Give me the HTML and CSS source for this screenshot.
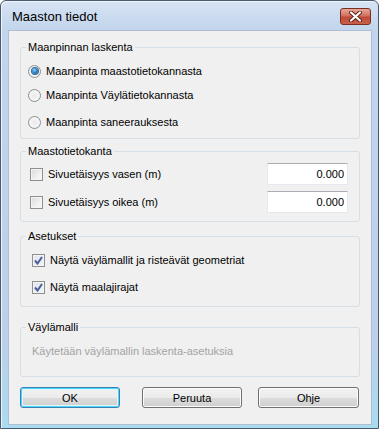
FILE: index.html
```html
<!DOCTYPE html>
<html lang="fi">
<head>
    <meta charset="UTF-8">
    <title>Maaston tiedot</title>
    <link rel="stylesheet" href="styles.css">
</head>
<body>
    <div class="window">
        <div class="titlebar">
            <span class="title">Maaston tiedot</span>
            <span class="close">
                <svg width="15" height="11" viewBox="0 0 15 11">
                    <path d="M3 1.5 L12 9.5 M12 1.5 L3 9.5" stroke="#5a2018" stroke-width="4" stroke-linecap="round"/>
                    <path d="M3 1.5 L12 9.5 M12 1.5 L3 9.5" stroke="#fff" stroke-width="2.2" stroke-linecap="round"/>
                </svg>
            </span>
        </div>

        <div class="client">
            <fieldset class="group group-surface">
                <legend>Maanpinnan laskenta</legend>
                <div class="row row-first"><span class="radio checked"></span>Maanpinta maastotietokannasta</div>
                <div class="row row-second"><span class="radio"></span>Maanpinta Väylätietokannasta</div>
                <div class="row row-third"><span class="radio"></span>Maanpinta saneerauksesta</div>
            </fieldset>

            <fieldset class="group group-db">
                <legend>Maastotietokanta</legend>
                <div class="field-row field-first">
                    <span class="check"></span>
                    <span class="field-label">Sivuetäisyys vasen (m)</span>
                    <input class="num" type="text" value="0.000">
                </div>
                <div class="field-row field-second">
                    <span class="check"></span>
                    <span class="field-label">Sivuetäisyys oikea (m)</span>
                    <input class="num" type="text" value="0.000">
                </div>
            </fieldset>

            <fieldset class="group group-settings">
                <legend>Asetukset</legend>
                <div class="row row-check first"><span class="check checked"><svg width="9" height="9" viewBox="0 0 9 9"><path d="M1 4.5 L3.5 7.5 L8 1" fill="none" stroke="#4a5f97" stroke-width="2"/></svg></span>Näytä väylämallit ja risteävät geometriat</div>
                <div class="row row-check"><span class="check checked"><svg width="9" height="9" viewBox="0 0 9 9"><path d="M1 4.5 L3.5 7.5 L8 1" fill="none" stroke="#4a5f97" stroke-width="2"/></svg></span>Näytä maalajirajat</div>
            </fieldset>

            <fieldset class="group group-model">
                <legend>Väylämalli</legend>
                <div class="disabled-text">Käytetään väylämallin laskenta-asetuksia</div>
            </fieldset>

            <div class="buttons">
                <button class="btn btn-ok">OK</button>
                <button class="btn btn-cancel">Peruuta</button>
                <button class="btn btn-help">Ohje</button>
            </div>
        </div>
    </div>
</body>
</html>
```

FILE: styles.css
```css
body {
    margin: 0;
    padding: 0;
    background-color: #fff;
    font-family: "Liberation Sans", Arial, sans-serif;
    font-size: 11px;
    color: #000;
}

.window {
    width: 379px;
    height: 429px;
    box-sizing: border-box;
    display: flex;
    flex-direction: column;
    border: 1px solid #4b5a6e;
    border-radius: 6px 6px 0 0;
    background: linear-gradient(to bottom, #d6e3f3 0%, #c2d5ec 30px, #bcd0e9 80%, #a9dcef 100%);
    box-shadow: inset 1px 1px 0 #eef4fb;
}

.titlebar {
    height: 29px;
    display: flex;
    align-items: center;
    justify-content: space-between;
    padding: 0 7px 0 11px;
}

.title {
    font-size: 13px;
    color: #000;
    margin-top: 2px;
}

.close {
    width: 29px;
    height: 15px;
    border: 1px solid #7a2d22;
    border-radius: 3px;
    background: linear-gradient(to bottom, #e9a898 0%, #d27060 45%, #c04a38 55%, #c8604a 100%);
    display: flex;
    align-items: center;
    justify-content: center;
    margin-top: 1px;
}

.client {
    flex: 1;
    margin: 0 6px 3px 7px;
    background-color: #f0f0f0;
    border: 1px solid #aebfd5;
    padding: 10px 11px 0 11px;
}

.group {
    margin: 0;
    padding: 0;
    border: 1px solid #d5dfe5;
    border-radius: 3px;
    box-sizing: border-box;
}

.group legend {
    margin-left: 5px;
    padding: 0 2px;
    line-height: 13px;
}

.group-surface {
    height: 98px;
}

.group-db {
    height: 77px;
    margin-top: 6px;
}

.group-settings {
    height: 77px;
    margin-top: 8px;
}

.group-model {
    height: 56px;
    margin-top: 14px;
}

.row {
    height: 20px;
    display: flex;
    align-items: center;
    padding-left: 7px;
}

.row-first {
    margin-top: 7px;
}

.row-second {
    margin-top: 4px;
}

.row-third {
    margin-top: 7px;
}

.row-check {
    margin-top: 7px;
    padding-left: 11px;
}

.radio {
    width: 11px;
    height: 11px;
    border: 1px solid #8c8f91;
    border-radius: 50%;
    margin-right: 5px;
    background: radial-gradient(circle at 50% 50%, #e8e8e8 0, #f6f6f6 60%, #dcdcdc 100%);
    display: inline-flex;
    align-items: center;
    justify-content: center;
}

.radio.checked::after {
    content: "";
    width: 6px;
    height: 6px;
    border-radius: 50%;
    background: radial-gradient(circle at 40% 35%, #8fd0f5 0, #2a7fc0 50%, #124a7c 100%);
    box-shadow: 0 0 0 1px #2f6a98;
}

.check {
    width: 11px;
    height: 11px;
    border: 1px solid #8e8f8f;
    background: linear-gradient(to bottom right, #d7d9dc 0%, #eef0f2 60%, #fafafa 100%);
    box-shadow: inset 0 0 0 1px #f4f4f4;
    margin-right: 5px;
    display: inline-flex;
    align-items: center;
    justify-content: center;
    flex-shrink: 0;
}

.check.checked {
    background: linear-gradient(to bottom right, #dfe4ee 0%, #f2f4f8 100%);
}

.field-row {
    height: 22px;
    display: flex;
    align-items: center;
    padding-left: 9px;
}

.field-first {
    margin-top: 5px;
}

.field-second {
    margin-top: 6px;
}

.field-label {
    flex: 1;
}

.num {
    width: 81px;
    height: 22px;
    box-sizing: border-box;
    margin: 0 11px 0 0;
    border: 1px solid #e3e9ef;
    border-top-color: #abadb3;
    background-color: #fff;
    text-align: right;
    padding: 0 3px 0 0;
    font-family: "Liberation Sans", Arial, sans-serif;
    font-size: 11px;
    color: #000;
}

.disabled-text {
    color: #a3a3a3;
    margin-top: 11px;
    padding-left: 11px;
    line-height: 13px;
}

.buttons {
    display: flex;
    margin-top: 10px;
}

.btn {
    height: 21px;
    width: 100px;
    border: 1px solid #707070;
    border-radius: 3px;
    background: linear-gradient(to bottom, #f2f2f2 0%, #ebebeb 50%, #dddddd 51%, #cfcfcf 100%);
    box-shadow: inset 0 0 0 1px #fcfcfc;
    font-family: "Liberation Sans", Arial, sans-serif;
    font-size: 11px;
    color: #000;
    padding: 0;
}

.btn-ok {
    border-color: #3c7fb1;
    box-shadow: inset 0 0 0 1px #48d8fb, inset 0 0 0 2px #e4f6fc;
}

.btn-cancel {
    margin-left: 22px;
}

.btn-help {
    margin-left: 16px;
    width: 101px;
}
```
